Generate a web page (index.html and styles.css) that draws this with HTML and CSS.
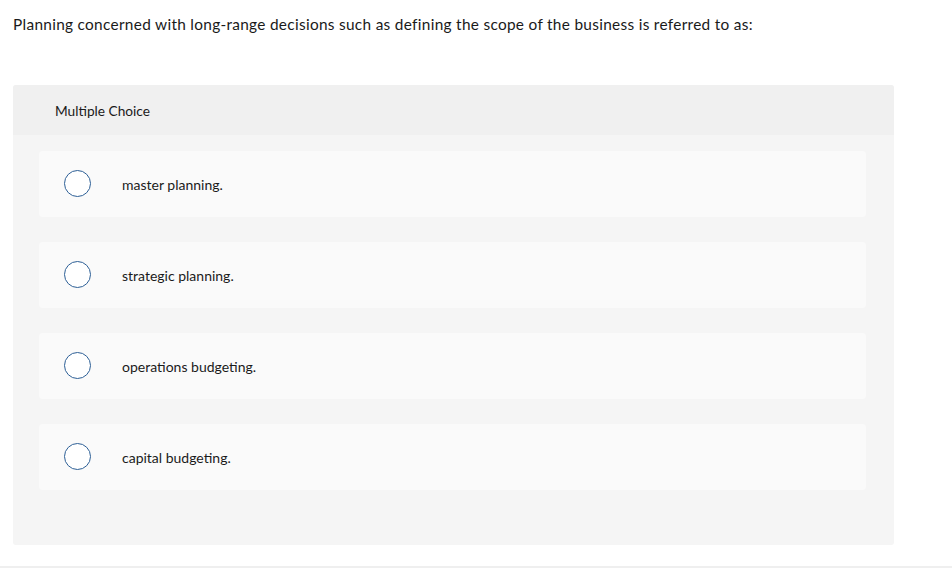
FILE: index.html
```html
<!DOCTYPE html>
<html>
<head>
<meta charset="utf-8">
<link rel="stylesheet" href="styles.css">
</head>
<body>
<div class="page">
  <p class="question">Planning concerned with long-range decisions such as defining the scope of the business is referred to as:</p>
  <div class="panel">
    <div class="panel-head">Multiple Choice</div>
    <div class="options">
      <div class="option"><span class="radio"></span><span class="label">master planning.</span></div>
      <div class="option"><span class="radio"></span><span class="label">strategic planning.</span></div>
      <div class="option"><span class="radio"></span><span class="label">operations budgeting.</span></div>
      <div class="option"><span class="radio"></span><span class="label">capital budgeting.</span></div>
    </div>
  </div>
</div>
<div class="bottom-line"></div>
</body>
</html>
```
FILE: styles.css
```css
html, body {
  margin: 0;
  padding: 0;
  background: #fff;
}
body {
  font-family: "Lato", "Open Sans", sans-serif;
  color: #1a1a1a;
  width: 952px;
  height: 568px;
  position: relative;
  overflow: hidden;
}
.page {
  padding: 14px 58px 0 13px;
}
.question {
  margin: 0;
  font-size: 15.4px;
  line-height: 20px;
  letter-spacing: 0.3px;
}
.panel {
  margin-top: 51px;
  background: #f5f5f5;
  border-radius: 3px;
  height: 460px;
  display: flex;
  flex-direction: column;
}
.panel-head {
  background: #f0f0f0;
  height: 50px;
  display: flex;
  align-items: center;
  padding-left: 42px;
  font-size: 13.7px;
  border-radius: 3px 3px 0 0;
}
.options {
  padding: 16px 28px 0 26px;
  display: flex;
  flex-direction: column;
  gap: 25px;
}
.option {
  background: #fafafa;
  border-radius: 4px;
  height: 66px;
  display: flex;
  align-items: center;
  padding-left: 25px;
}
.radio {
  width: 25px;
  height: 25px;
  border: 1.5px solid #2d5f96;
  border-radius: 50%;
  background: #fff;
  flex: none;
  margin-top: -1px;
}
.label {
  margin-left: 31px;
  margin-top: 1px;
  font-size: 14px;
}
.bottom-line {
  position: absolute;
  left: 0;
  right: 0;
  bottom: 0;
  height: 2px;
  background: #efefef;
}
```
